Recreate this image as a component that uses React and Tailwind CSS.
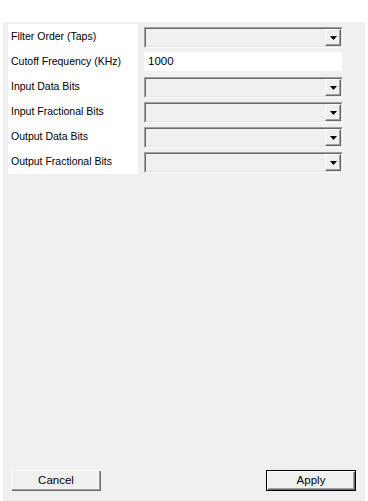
import React from "react";

const rows = [
  { label: "Filter Order (Taps)", kind: "combo" },
  { label: "Cutoff Frequency (KHz)", kind: "text", value: "1000" },
  { label: "Input Data Bits", kind: "combo" },
  { label: "Input Fractional Bits", kind: "combo" },
  { label: "Output Data Bits", kind: "combo" },
  { label: "Output Fractional Bits", kind: "combo" },
];

function Combo() {
  return (
    <div className="h-[21px] w-[199px] border border-[#a0a0a0] border-r-white border-b-white">
      <div className="flex h-full border border-[#696969] border-r-[#e3e3e3] border-b-[#e3e3e3] bg-[#f0f0f0]">
        <div className="flex-1" />
        <div className="flex h-full w-[16px] items-center justify-center border border-white border-r-[#696969] border-b-[#696969] bg-[#f0f0f0] shadow-[inset_-1px_-1px_0_#a0a0a0]">
          <svg width="7" height="4" viewBox="0 0 7 4">
            <path d="M0 0h7L3.5 4z" fill="#000" />
          </svg>
        </div>
      </div>
    </div>
  );
}

function TextBox({ value }) {
  return (
    <div className="flex h-[19px] w-[198px] items-center bg-white pl-[4px] text-[11.5px] text-black">
      {value}
    </div>
  );
}

function Btn({ children, primary }) {
  return (
    <button
      className={
        "h-[21px] w-[90px] bg-[#f0f0f0] text-[11.5px] text-black " +
        (primary
          ? "border border-black shadow-[inset_1px_1px_0_#fff,inset_-1px_-1px_0_#696969,inset_-2px_-2px_0_#a0a0a0]"
          : "shadow-[inset_1px_1px_0_#fff,inset_-1px_-1px_0_#696969,inset_-2px_-2px_0_#a0a0a0]")
      }
    >
      {children}
    </button>
  );
}

export default function App() {
  return (
    <div
      className="h-[501px] w-[368px] bg-white px-[3px] pt-[22px]"
      style={{ fontFamily: '"Liberation Sans", Arial, sans-serif' }}
    >
      <div className="flex h-full flex-col bg-[#f0f0f0]">
        <div className="flex items-start pl-[5px] pt-[2px]">
          <div className="w-[130px] bg-white">
            {rows.map((r) => (
              <div key={r.label} className="flex h-[25px] items-center pl-[3px] text-[10.5px] text-black">
                {r.label}
              </div>
            ))}
          </div>
          <div className="ml-[6px]">
            {rows.map((r) => (
              <div key={r.label} className="h-[25px] pt-[3px]">
                {r.kind === "combo" ? <Combo /> : <TextBox value={r.value} />}
              </div>
            ))}
          </div>
        </div>
        <div className="flex-1" />
        <div className="flex justify-between pb-[10px] pl-[8px] pr-[9px]">
          <Btn>Cancel</Btn>
          <Btn primary>Apply</Btn>
        </div>
      </div>
    </div>
  );
}
